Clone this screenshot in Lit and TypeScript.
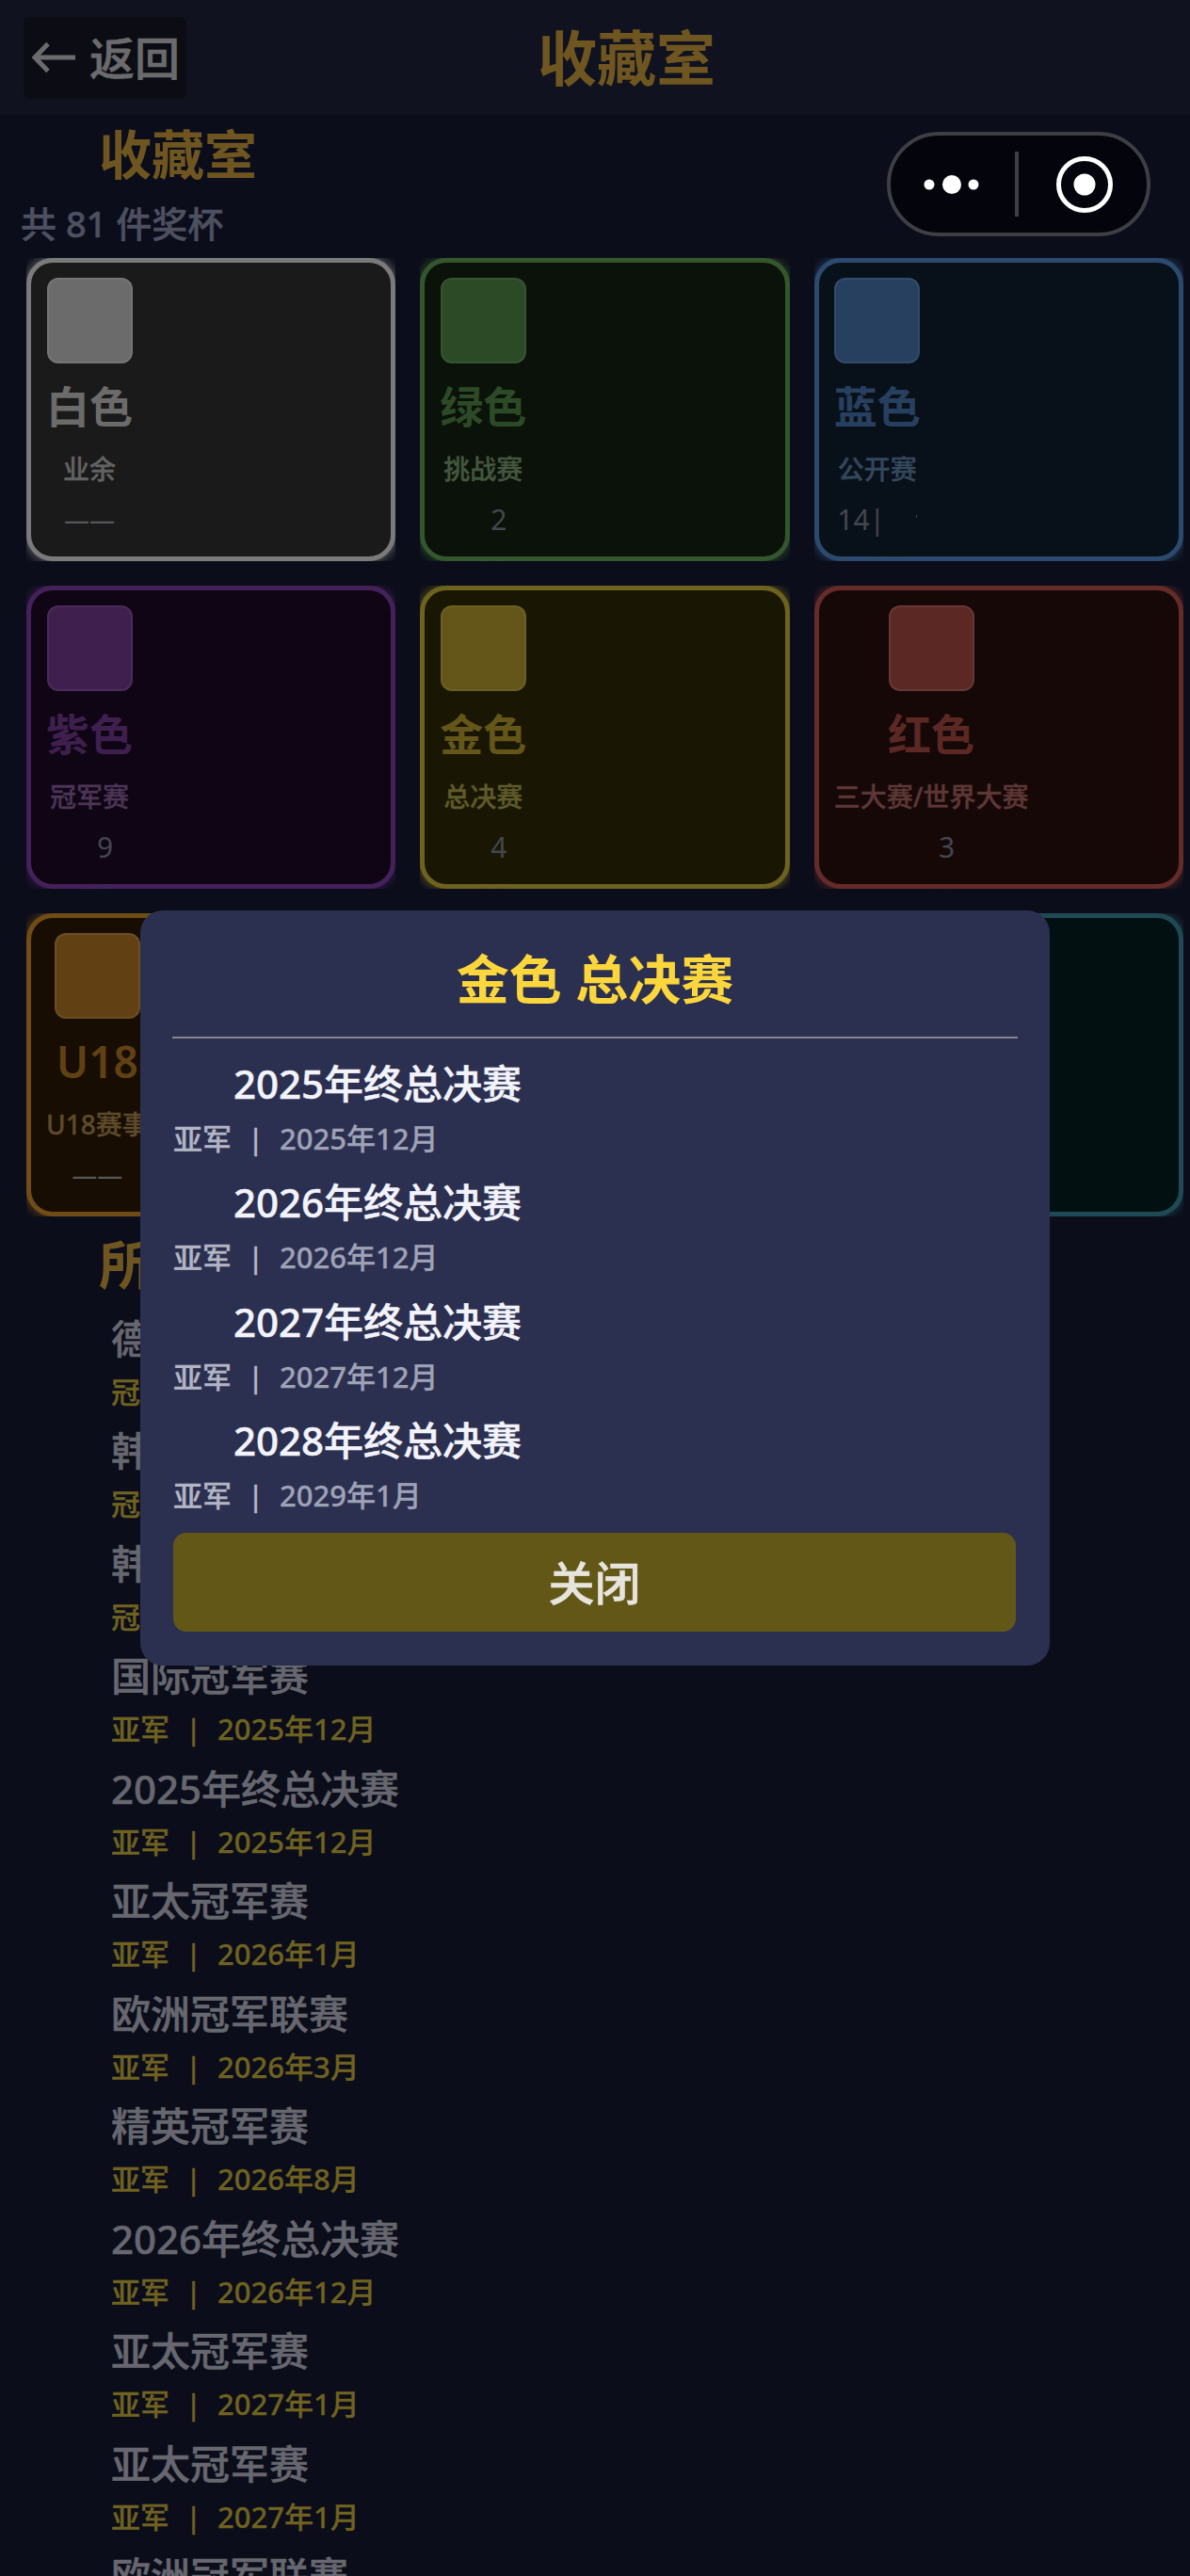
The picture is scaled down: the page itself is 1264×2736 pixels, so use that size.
import { LitElement, html, css } from 'lit';
import { customElement, state } from 'lit/decorators.js';

type Tone = 'white' | 'green' | 'blue' | 'purple' | 'gold' | 'red' | 'orange' | 'teal';

interface Shelf {
  tone: Tone;
  name: string;
  tier: string;
  count: string;
}

const SHELVES: Shelf[] = [
  { tone: 'white', name: '白色', tier: '业余', count: '' },
  { tone: 'green', name: '绿色', tier: '挑战赛', count: '2' },
  { tone: 'blue', name: '蓝色', tier: '公开赛', count: '14|' },
  { tone: 'purple', name: '紫色', tier: '冠军赛', count: '9' },
  { tone: 'gold', name: '金色', tier: '总决赛', count: '4' },
  { tone: 'red', name: '红色', tier: '三大赛/世界大赛', count: '3' },
  { tone: 'orange', name: 'U18', tier: 'U18赛事', count: '' },
  { tone: 'gold', name: '黑金', tier: '特别赛', count: '' },
  { tone: 'teal', name: '青色', tier: '青年赛', count: '' },
];

const TROPHIES = [
  ['德国冠军赛', '冠军', '2025年3月'],
  ['韩国公开赛', '冠军', '2025年6月'],
  ['韩国大师赛', '冠军', '2025年9月'],
  ['国际冠军赛', '亚军', '2025年12月'],
  ['2025年终总决赛', '亚军', '2025年12月'],
  ['亚太冠军赛', '亚军', '2026年1月'],
  ['欧洲冠军联赛', '亚军', '2026年3月'],
  ['精英冠军赛', '亚军', '2026年8月'],
  ['2026年终总决赛', '亚军', '2026年12月'],
  ['亚太冠军赛', '亚军', '2027年1月'],
  ['亚太冠军赛', '亚军', '2027年1月'],
  ['欧洲冠军联赛', '亚军', '2027年3月'],
];

const FINALS = [
  ['2025年终总决赛', '2025年12月'],
  ['2026年终总决赛', '2026年12月'],
  ['2027年终总决赛', '2027年12月'],
  ['2028年终总决赛', '2029年1月'],
];

@customElement('app-root')
export class AppRoot extends LitElement {
  static override styles = css`
    :host {
      display: block;
      position: relative;
      height: 2736px;
      overflow: hidden;
      background: #0b0d1a;
      font-family: 'Noto Sans', 'Noto Sans CJK SC', sans-serif;
    }

    .topbar {
      display: flex;
      align-items: center;
      height: 122px;
      padding-left: 25px;
      box-sizing: border-box;
      background: #10131f;
    }

    .back {
      display: flex;
      align-items: center;
      gap: 15px;
      width: 173px;
      height: 87px;
      padding-left: 9px;
      box-sizing: border-box;
      border-radius: 6px;
      background: #0c0d14;
      color: #6b6b6d;
      font-size: 48px;
      font-weight: 500;
      -webkit-text-stroke: 0.6px #6b6b6d;
    }

    .back span {
      padding-bottom: 5px;
    }

    .topbar h1 {
      margin: 0 0 0 373px;
      color: #6f5620;
      font-size: 63px;
      font-weight: 700;
      line-height: 80px;
    }

    .heading {
      margin: 5px 0 0 105px;
      color: #6f5620;
      font-size: 56px;
      font-weight: 700;
      line-height: 72px;
    }

    .total {
      margin: 13px 0 0 22px;
      color: #4d5060;
      font-size: 38px;
      font-weight: 500;
      line-height: 50px;
      -webkit-text-stroke: 0.5px #4d5060;
    }

    .shelves {
      display: grid;
      grid-template-columns: repeat(3, 1fr);
      gap: 26px;
      margin: 12px 7px 0 28px;
    }

    .shelf {
      height: 322px;
      overflow: hidden;
    }

    .panel {
      height: 100%;
      padding: 16px;
      box-sizing: border-box;
      border: 5px solid var(--edge);
      border-radius: 28px;
      background: var(--fill);
      box-shadow: 0 0 12px var(--edge);
    }

    .stack {
      display: inline-flex;
      flex-direction: column;
      align-items: center;
    }

    .swatch {
      width: 91px;
      height: 91px;
      box-sizing: border-box;
      border: 2px solid var(--swatch-edge);
      border-radius: 12px;
      background: var(--swatch);
    }

    .name {
      margin-top: 15px;
      color: var(--swatch);
      font-size: 46px;
      font-weight: 600;
      line-height: 60px;
      white-space: nowrap;
    }

    .tier {
      margin-top: 18px;
      color: var(--tier);
      font-size: 28px;
      font-weight: 500;
      line-height: 38px;
      white-space: nowrap;
      -webkit-text-stroke: 0.4px var(--tier);
    }

    .count {
      position: relative;
      margin-top: 14px;
      padding-left: 33px;
      color: #44464f;
      font-size: 30px;
      line-height: 42px;
    }

    .count.wide {
      padding: 0 34px 0 0;
    }

    /* stray caret speck right of the blue count */
    .count.wide::after {
      content: '';
      position: absolute;
      top: 16px;
      left: 84px;
      width: 1px;
      height: 3px;
      background: #34475c;
    }

    .dash {
      margin-top: 14px;
      color: #55565a;
      font-size: 27px;
      line-height: 42px;
    }

    .note {
      margin-top: 16px;
      color: var(--tier);
      font-size: 21px;
      line-height: 30px;
      white-space: nowrap;
    }

    .white { --edge: #7a7a7a; --fill: #1a1a1a; --swatch: #6b6b6b; --swatch-edge: #757575; --tier: #626262; }
    .green { --edge: #33562c; --fill: #0a1209; --swatch: #2c4a26; --swatch-edge: #355431; --tier: #44563f; }
    .blue { --edge: #2c4a6d; --fill: #08101a; --swatch: #28405f; --swatch-edge: #334b69; --tier: #34475c; }
    .purple { --edge: #44215a; --fill: #0f0514; --swatch: #3e1f4e; --swatch-edge: #4a2c5a; --tier: #4b3456; }
    .gold { --edge: #6e621f; --fill: #191704; --swatch: #635618; --swatch-edge: #6b5f26; --tier: #5f5a2a; }
    .red { --edge: #642b28; --fill: #170808; --swatch: #5b2824; --swatch-edge: #653836; --tier: #5d3735; }
    .orange { --edge: #704c16; --fill: #170d02; --swatch: #614114; --swatch-edge: #6b4e24; --tier: #5d4a2b; }
    .teal { --edge: #1f4a54; --fill: #031012; --swatch: #1f4a54; --swatch-edge: #2a545c; --tier: #2f4c50; }

    .heading.lower {
      margin-top: 13.5px;
    }

    .trophies {
      display: flex;
      flex-direction: column;
      gap: 12.5px;
      margin: 15px 0 0 118px;
    }

    .row-title {
      color: #66676f;
      font-size: 42px;
      font-weight: 500;
      line-height: 57px;
      -webkit-text-stroke: 0.5px #66676f;
    }

    .row-meta {
      margin-top: 6px;
      color: #6f6220;
      font-size: 31px;
      font-weight: 500;
      line-height: 44px;
      -webkit-text-stroke: 0.3px #6f6220;
    }

    .row-meta .bar {
      margin: 0 17px;
    }

    .capsule {
      position: absolute;
      top: 140px;
      left: 942px;
      width: 280px;
      height: 111px;
      box-sizing: border-box;
      border: 4px solid #3e3e45;
      border-radius: 56px;
      background: #04050c;
    }

    .capsule svg {
      display: block;
    }

    .scrim {
      position: absolute;
      inset: 0;
      display: flex;
      align-items: center;
      justify-content: center;
    }

    .dialog {
      width: 966px;
      height: 802px;
      padding: 35px 34px;
      box-sizing: border-box;
      border-radius: 24px;
      background: #2c3050;
    }

    .dialog h2 {
      margin: 0;
      padding-bottom: 25px;
      border-bottom: 2px solid #85868f;
      color: #fbd63c;
      font-size: 56px;
      font-weight: 700;
      line-height: 74px;
      text-align: center;
    }

    .finals {
      display: flex;
      flex-direction: column;
      gap: 17.5px;
      margin-top: 18.5px;
    }

    .final-title {
      margin-left: 65px;
      color: #f2f3fb;
      font-size: 42px;
      font-weight: 500;
      line-height: 57px;
      -webkit-text-stroke: 0.5px #f2f3fb;
    }

    .final-meta {
      margin: 8px 0 0 1px;
      color: #b2b5c4;
      font-size: 31px;
      font-weight: 500;
      line-height: 44px;
      -webkit-text-stroke: 0.3px #b2b5c4;
    }

    .final-meta .bar {
      margin: 0 17px;
    }

    .final-meta .when {
      color: #9ea2b6;
      -webkit-text-stroke: 0.3px #9ea2b6;
    }

    .close {
      display: block;
      width: 895px;
      height: 105px;
      margin: 17.5px 0 0 1px;
      padding: 0 0 4px;
      border: none;
      border-radius: 14px;
      background: #635718;
      color: #e6e4dc;
      font: 500 49px 'Noto Sans', 'Noto Sans CJK SC', sans-serif;
      -webkit-text-stroke: 0.6px #e6e4dc;
    }
  `;

  @state()
  private shelves = SHELVES;

  private renderShelf(shelf: Shelf) {
    return html`
      <div class="shelf ${shelf.tone}">
        <div class="panel">
          <div class="stack">
            <div class="swatch"></div>
            <div class="name">${shelf.name}</div>
            <div class="tier">${shelf.tier}</div>
            ${shelf.count
              ? html`<div class="count ${shelf.count.length > 1 ? 'wide' : ''}">${shelf.count}</div>
                  <div class="note">已收集</div>`
              : html`<div class="dash">——</div>`}
          </div>
        </div>
      </div>
    `;
  }

  override render() {
    return html`
      <header class="topbar">
        <div class="back">
          <svg width="46" height="32" viewBox="0 0 46 32" fill="none" stroke="#6b6b6d" stroke-width="5">
            <path d="M3 16H46M17 1.5L3 16L17 30.5" />
          </svg>
          <span>返回</span>
        </div>
        <h1>收藏室</h1>
      </header>

      <div class="heading">收藏室</div>
      <div class="total">共 81 件奖杯</div>

      <section class="shelves">${this.shelves.map((s) => this.renderShelf(s))}</section>

      <div class="heading lower">所有奖杯</div>
      <section class="trophies">
        ${TROPHIES.map(
          ([title, place, when]) => html`
            <div>
              <div class="row-title">${title}</div>
              <div class="row-meta">${place}<span class="bar">|</span>${when}</div>
            </div>
          `,
        )}
      </section>

      <div class="capsule">
        <svg width="272" height="103" viewBox="0 0 272 103" fill="#fff">
          <circle cx="41" cy="52" r="5.5" />
          <circle cx="65" cy="52" r="10" />
          <circle cx="88" cy="52" r="5.5" />
          <rect x="132" y="17" width="4" height="69" fill="#3e3e45" />
          <circle cx="206" cy="52" r="11.5" />
          <circle cx="206" cy="52" r="27.5" fill="none" stroke="#fff" stroke-width="5" />
        </svg>
      </div>

      <div class="scrim">
        <div class="dialog">
          <h2>金色 总决赛</h2>
          <div class="finals">
            ${FINALS.map(
              ([title, when]) => html`
                <div>
                  <div class="final-title">${title}</div>
                  <div class="final-meta">亚军<span class="bar">|</span><span class="when">${when}</span></div>
                </div>
              `,
            )}
          </div>
          <button class="close">关闭</button>
        </div>
      </div>
    `;
  }
}
